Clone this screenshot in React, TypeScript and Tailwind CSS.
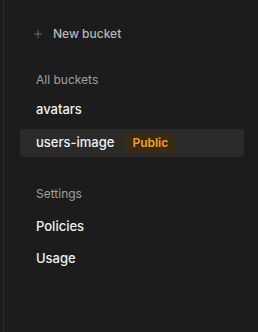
import { Plus } from "lucide-react";

export default function App() {
  return (
    <div className="flex h-[332px] w-[258px] bg-[#1c1c1c] font-['Inter',sans-serif]">
      <div className="ml-[3px] w-px bg-[#2e2e2e]" />
      <nav className="flex flex-1 flex-col pt-[25px] pl-[16px] pr-[14px]">
        <button className="flex h-[18px] items-center gap-[9px] pl-[12px] text-[12px] font-medium text-[#b8b8b8]">
          <Plus size={12} strokeWidth={1.5} className="text-[#8a8a8a]" />
          New bucket
        </button>

        <div className="mt-[28px] pl-[16px] text-[12px] text-[#a0a0a0]">All buckets</div>
        <div className="mt-[11px] pl-[16px] text-[13px] font-medium text-[#f0f0f0]">avatars</div>
        <div className="mt-[9px] flex h-[28px] items-center gap-[8px] rounded-[4px] bg-[#2a2a2a] pl-[16px]">
          <span className="text-[13px] font-medium text-[#f0f0f0]">users-image</span>
          <span className="rounded-full bg-[#382a19] px-[10px] py-[3px] text-[12px] font-semibold leading-4 text-[#f5a01a]">
            Public
          </span>
        </div>

        <div className="mt-[28px] pl-[16px] text-[12px] text-[#a0a0a0]">Settings</div>
        <div className="mt-[14px] pl-[16px] text-[13px] font-medium text-[#f0f0f0]">Policies</div>
        <div className="mt-[13px] pl-[16px] text-[13px] font-medium text-[#f0f0f0]">Usage</div>
      </nav>
    </div>
  );
}
